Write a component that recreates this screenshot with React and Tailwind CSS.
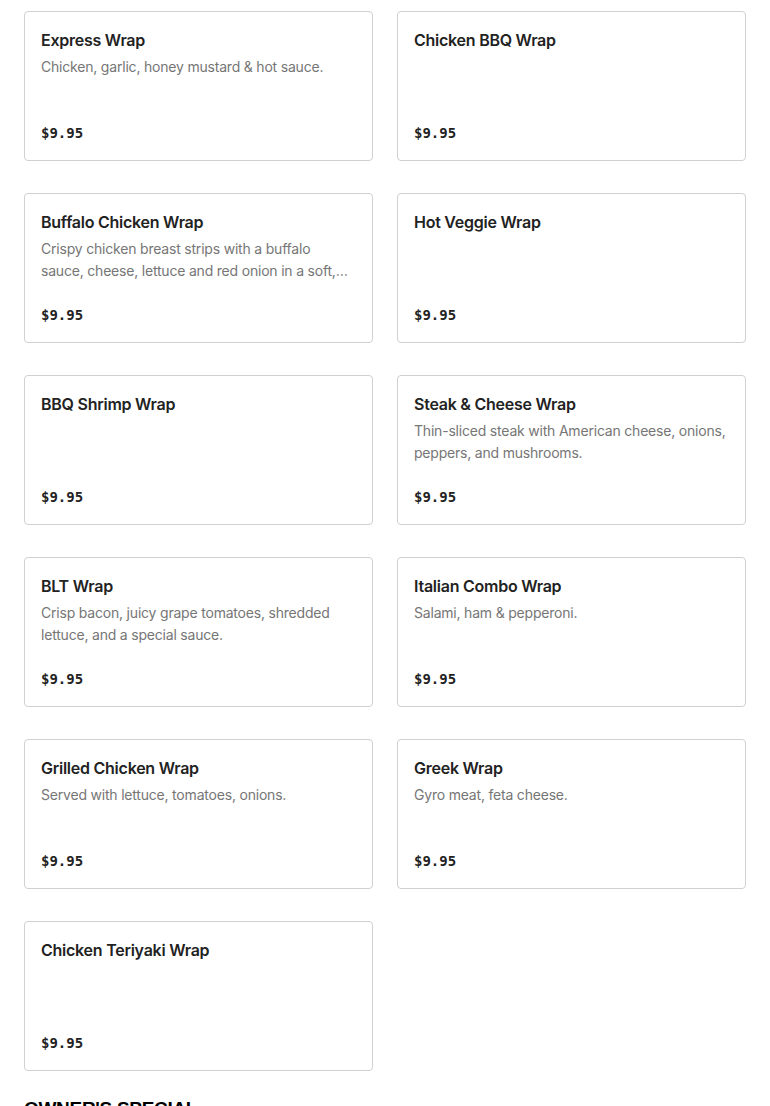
import React from "react";

const items = [
  ["Express Wrap", "Chicken, garlic, honey mustard & hot sauce."],
  ["Chicken BBQ Wrap", ""],
  ["Buffalo Chicken Wrap", "Crispy chicken breast strips with a buffalo sauce, cheese, lettuce and red onion in a soft, warm tortilla wrap."],
  ["Hot Veggie Wrap", ""],
  ["BBQ Shrimp Wrap", ""],
  ["Steak & Cheese Wrap", "Thin-sliced steak with American cheese, onions, peppers, and mushrooms."],
  ["BLT Wrap", "Crisp bacon, juicy grape tomatoes, shredded lettuce, and a special sauce."],
  ["Italian Combo Wrap", "Salami, ham & pepperoni."],
  ["Grilled Chicken Wrap", "Served with lettuce, tomatoes, onions."],
  ["Greek Wrap", "Gyro meat, feta cheese."],
  ["Chicken Teriyaki Wrap", ""],
];

export default function App() {
  return (
    <div className="bg-white px-6 pt-[11px] font-['Inter','Noto_Sans',sans-serif]">
      <div className="grid grid-cols-2 gap-x-6 gap-y-8">
        {items.map(([name, desc]) => (
          <div
            key={name}
            className="h-[150px] border border-[#d0d0d0] rounded-[4px] px-4 pt-4 pb-[17px] flex flex-col"
          >
            <div className="text-[16px] leading-6 font-semibold text-[#222222] tracking-[-0.25px]">{name}</div>
            <div className="mt-1 pr-[1px] text-[14px] leading-[22px] text-[#767676] line-clamp-2 tracking-[-0.2px]">{desc}</div>
            <div className="mt-auto text-[14px] leading-5 font-bold text-[#222222] font-['DejaVu_Sans_Mono',monospace]">$9.95</div>
          </div>
        ))}
      </div>
      <h2 className="mt-[22px] text-[19px] leading-8 font-black text-black tracking-[-0.3px] font-['Liberation_Sans',sans-serif]">OWNER'S SPECIAL</h2>
    </div>
  );
}
